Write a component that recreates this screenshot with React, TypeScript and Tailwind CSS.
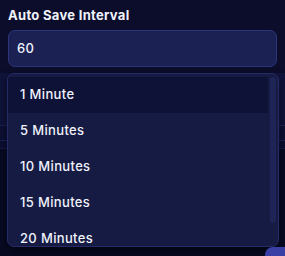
import * as React from 'react'

const options = ['1 Minute', '5 Minutes', '10 Minutes', '15 Minutes', '20 Minutes']

export default function App() {
  return (
    <div
      className="relative h-[256px] w-[285px] overflow-hidden bg-[#0b0d2b] text-[#f0f2fb]"
      style={{ fontFamily: 'Inter, "Noto Sans", sans-serif' }}
    >
      <div className="px-2 pt-[7px]">
        <h3 className="text-[13px] font-bold leading-[16px] tracking-[0.3px]">Auto Save Interval</h3>
        <div className="mt-[7px] flex h-[37px] items-center rounded-[7px] border border-[#2d357a] bg-[#1c2154] px-2">
          <span className="text-[13px] font-medium tracking-[0.3px]">60</span>
        </div>
      </div>

      {/* content behind the open list */}
      <div className="mt-[6px] flex flex-col">
        <div className="h-[52px] bg-[#10133a]" />
        <div className="h-[15px] border-t border-[#1d2152] bg-[#0d1034]" />
        <div className="h-[8px] border-t border-[#1d2152] bg-[#0b0e30]" />
        <div className="h-[120px] border-t border-[#161a46] bg-[#070a22]" />
      </div>

      <div className="absolute left-[7px] top-[73px] h-[174px] w-[272px] overflow-hidden rounded-[7px] border border-[#252b68] bg-[#161b43] shadow-[0_4px_10px_rgba(0,0,0,0.5)]">
        <div className="flex h-full">
          <ul className="flex-1 overflow-hidden pt-[3px]">
            {options.map((o, i) => (
              <li
                key={o}
                className={
                  'flex h-[36px] items-center px-3 text-[13px] font-medium tracking-[0.35px] ' +
                  (i === 0 ? 'bg-[#0f1237]' : '')
                }
              >
                {o}
              </li>
            ))}
          </ul>
          <div className="w-[10px] pl-[2px] pr-[1px] pt-[3px]">
            <div className="h-[146px] w-[6px] rounded-full bg-[#1e2455]" />
          </div>
        </div>
      </div>

      <div className="absolute left-[265px] top-[247px] h-[20px] w-[30px] rounded-tl-[8px] bg-[#3a3fa6]" />
    </div>
  )
}
